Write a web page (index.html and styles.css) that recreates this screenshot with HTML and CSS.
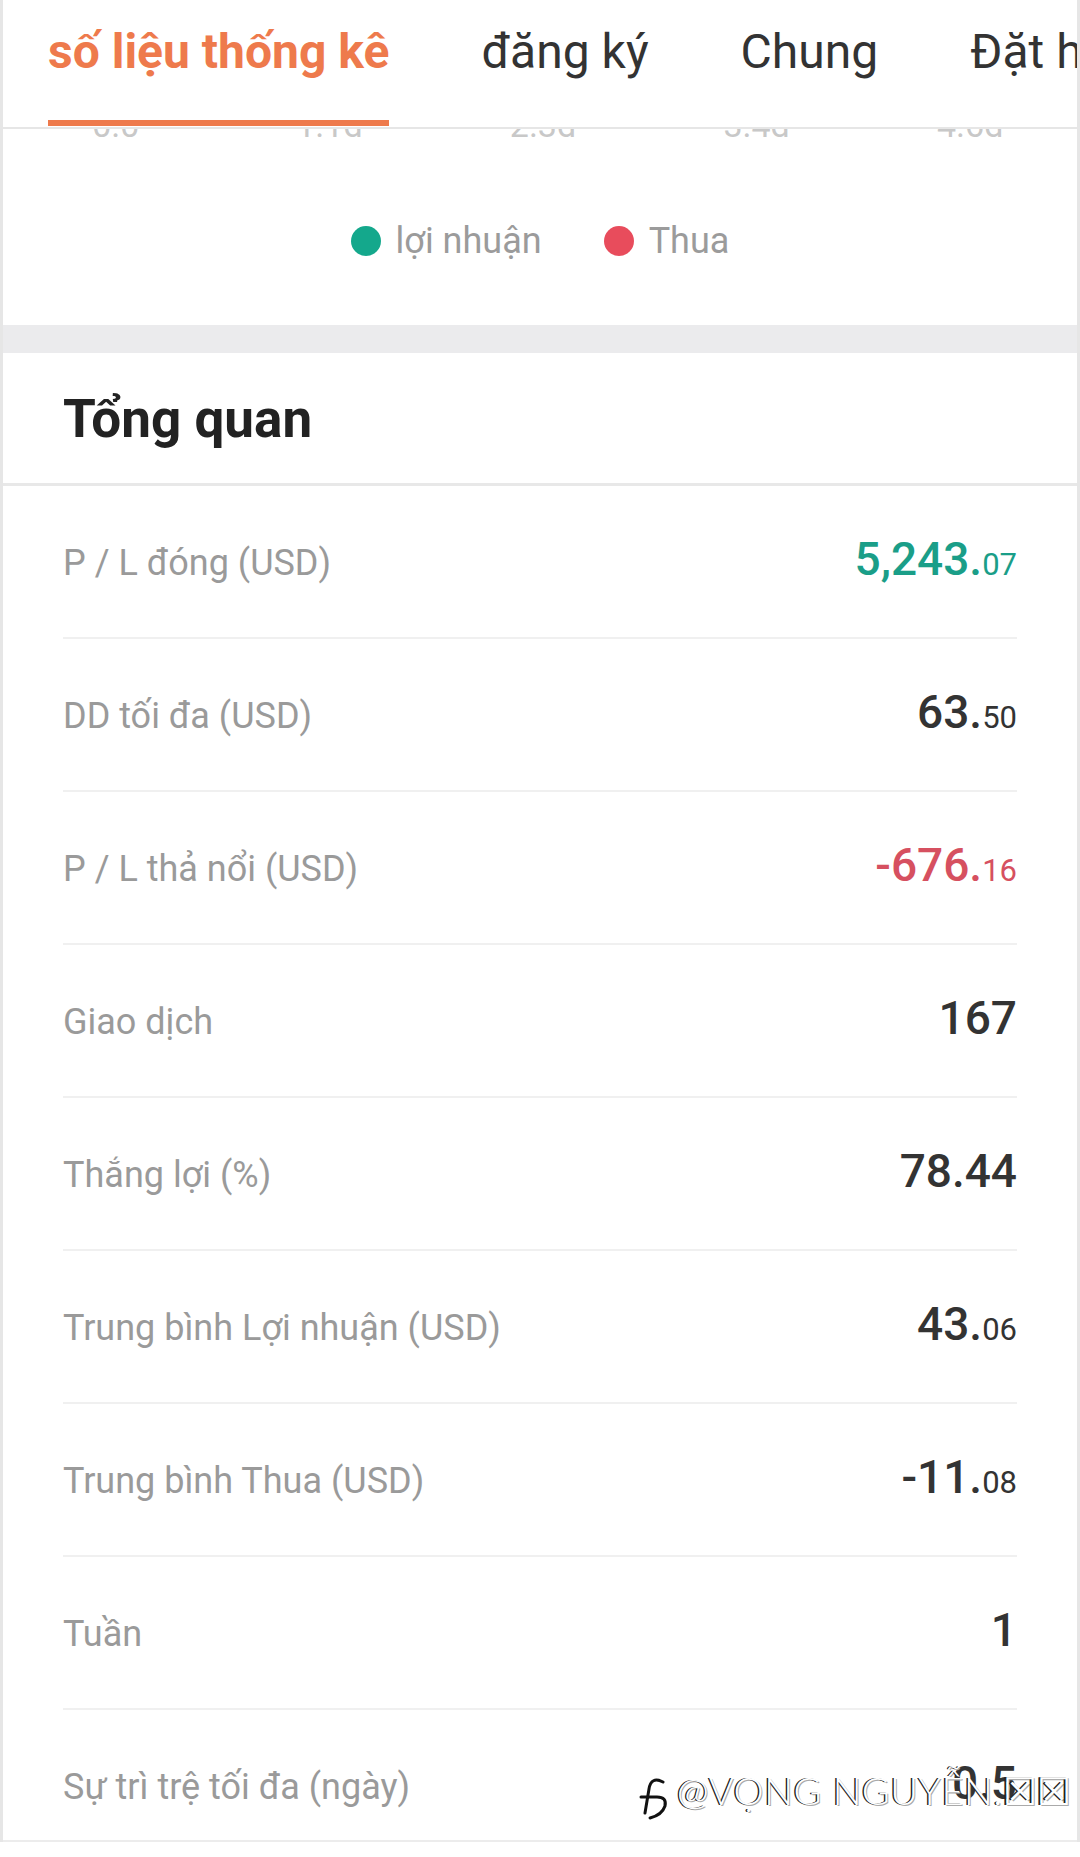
FILE: index.html
```html
<!DOCTYPE html>
<html>
<head>
    <meta charset="utf-8">
    <title>Tổng quan</title>
    <link rel="stylesheet" href="styles.css">
</head>
<body>
<div class="page">
    <nav class="tabs">
        <div class="tab is-active">số liệu thống kê</div>
        <div class="tab">đăng ký</div>
        <div class="tab">Chung</div>
        <div class="tab">Đặt hàng</div>
    </nav>
    <section class="chart">
        <div class="axis">
            <span>0.0</span>
            <span>1.1d</span>
            <span>2.3d</span>
            <span>3.4d</span>
            <span>4.6d</span>
        </div>
        <div class="legend">
            <div class="legend-item"><i class="dot dot-win"></i>lợi nhuận</div>
            <div class="legend-item"><i class="dot dot-loss"></i>Thua</div>
        </div>
    </section>
    <div class="band"></div>
    <section class="overview">
        <h2 class="overview-title">Tổng quan</h2>
        <ul class="stats">
            <li class="stat"><span class="stat-label">P / L đóng (USD)</span><span class="stat-value is-up">5,243.<small>07</small></span></li>
            <li class="stat"><span class="stat-label">DD tối đa (USD)</span><span class="stat-value">63.<small>50</small></span></li>
            <li class="stat"><span class="stat-label">P / L thả nổi (USD)</span><span class="stat-value is-down">-676.<small>16</small></span></li>
            <li class="stat"><span class="stat-label">Giao dịch</span><span class="stat-value">167</span></li>
            <li class="stat"><span class="stat-label">Thắng lợi (%)</span><span class="stat-value">78.44</span></li>
            <li class="stat"><span class="stat-label">Trung bình Lợi nhuận (USD)</span><span class="stat-value">43.<small>06</small></span></li>
            <li class="stat"><span class="stat-label">Trung bình Thua (USD)</span><span class="stat-value">-11.<small>08</small></span></li>
            <li class="stat"><span class="stat-label">Tuần</span><span class="stat-value">1</span></li>
            <li class="stat"><span class="stat-label">Sự trì trệ tối đa (ngày)</span><span class="stat-value">0.5</span></li>
        </ul>
    </section>
</div>
<div class="watermark">
    <svg class="watermark-logo" width="34" height="44" viewBox="0 0 34 44">
        <path d="M25 6 Q13 0 11 13 L7 37" fill="none" stroke="#111" stroke-width="3" stroke-linecap="round"/>
        <path d="M3 21 H19 Q29 21 27 30 Q24 39 12 42" fill="none" stroke="#111" stroke-width="3" stroke-linecap="round"/>
    </svg>
    <span class="watermark-text">@VỌNG NGUYỄN.<span class="box">☒☒</span></span>
</div>
</body>
</html>
```

FILE: styles.css
```css
body {
    margin: 0;
    background: #fff;
    font-family: Roboto, "Noto Sans", sans-serif;
    position: relative;
    height: 1857px;
}

.page {
    border-left: 3px solid #e6e6e6;
    border-right: 3px solid #e6e6e6;
}

.tabs {
    display: flex;
    gap: 92px;
    height: 127px;
    padding-left: 45px;
    border-bottom: 2px solid #e6e6e6;
    overflow: hidden;
    white-space: nowrap;
    position: relative;
    z-index: 1;
    background: #fff;
}

.tab {
    flex-shrink: 0;
    box-sizing: border-box;
    height: 126px;
    padding-top: 24px;
    font-size: 48px;
    line-height: 56px;
    color: #333;
    border-bottom: 6px solid transparent;
}

.tab.is-active {
    color: #ee7a4c;
    font-weight: bold;
    border-bottom-color: #ee7a4c;
}

.chart {
    height: 196px;
    overflow: hidden;
}

.axis {
    display: flex;
    padding-left: 6px;
    margin-top: -21px;
}

.axis span {
    width: 214px;
    text-align: center;
    font-size: 34px;
    line-height: 34px;
    color: #c8c8c8;
}

.legend {
    display: flex;
    justify-content: center;
    gap: 62px;
    margin-top: 79px;
}

.legend-item {
    display: flex;
    align-items: center;
    gap: 15px;
    font-size: 36px;
    line-height: 40px;
    color: #9b9b9b;
}

.dot {
    width: 30px;
    height: 30px;
    border-radius: 50%;
}

.dot-win {
    background: #14a88c;
}

.dot-loss {
    background: #e84c5c;
}

.band {
    height: 28px;
    background: #ebebed;
}

.overview {
    height: 1487px;
    overflow: hidden;
    border-bottom: 2px solid #ececec;
}

.overview-title {
    margin: 0;
    padding: 36px 60px 34px;
    font-size: 53px;
    line-height: 60px;
    font-weight: bold;
    color: #222;
    border-bottom: 3px solid #e8e8e8;
}

.stats {
    list-style: none;
    margin: 0;
    padding: 0;
}

.stat {
    display: flex;
    justify-content: space-between;
    align-items: baseline;
    box-sizing: border-box;
    height: 153px;
    padding-top: 45px;
    margin: 0 60px;
    border-bottom: 2px solid #f0f0f0;
}

.stat-label {
    font-size: 36px;
    line-height: 56px;
    color: #9a9a9a;
}

.stat-value {
    font-size: 46px;
    line-height: 56px;
    font-weight: 500;
    color: #333;
}

.stat-value small {
    font-size: 31px;
    font-weight: 400;
}

.stat-value.is-up {
    color: #1a9e88;
}

.stat-value.is-down {
    color: #d65060;
}

.watermark {
    position: absolute;
    left: 638px;
    top: 1762px;
    display: flex;
    align-items: center;
    gap: 5px;
    white-space: nowrap;
}

.watermark-logo {
    margin-top: 14px;
}

.watermark-text {
    font-family: Lato, "Liberation Sans", sans-serif;
    font-weight: 300;
    font-size: 38px;
    line-height: 44px;
    color: #fff;
    text-shadow: -1.5px 0 0 #222, 1px 1px 0 #aaa;
    letter-spacing: 0.5px;
}

.watermark-text .box {
    font-family: "DejaVu Sans", sans-serif;
    font-size: 38px;
    letter-spacing: 0;
}
```
